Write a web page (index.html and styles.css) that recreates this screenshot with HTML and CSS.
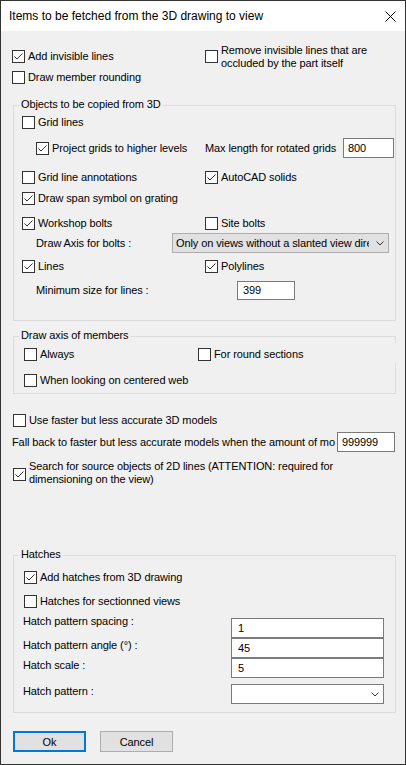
FILE: index.html
```html
<!DOCTYPE html>
<html>
<head>
<meta charset="utf-8">
<link rel="stylesheet" href="styles.css">
</head>
<body>
<div class="window">
  <div class="titlebar">
    <span class="title">Items to be fetched from the 3D drawing to view</span>
    <svg class="close" width="11" height="11" viewBox="0 0 11 11"><path d="M0.5 0.5L10.5 10.5M10.5 0.5L0.5 10.5" stroke="#000" stroke-width="1" fill="none"/></svg>
  </div>
  <div class="content">
    <div class="top">
      <div class="top-col1">
        <div class="cb"><span class="box on"><svg width="11" height="11" viewBox="0 0 11 11"><path d="M1.5 5.5L4 8L9.5 2.5" stroke="#333" fill="none"/></svg></span><span>Add invisible lines</span></div>
        <div class="cb"><span class="box"></span><span>Draw member rounding</span></div>
      </div>
      <div class="cb cb-multi"><span class="box"></span><span>Remove invisible lines that are<br>occluded by the part itself</span></div>
    </div>

    <div class="group g1">
      <span class="legend">Objects to be copied from 3D</span>
      <div class="row r1"><div class="cb"><span class="box"></span><span>Grid lines</span></div></div>
      <div class="row r-project">
        <div class="c-project"><div class="cb"><span class="box on"><svg width="11" height="11" viewBox="0 0 11 11"><path d="M1.5 5.5L4 8L9.5 2.5" stroke="#333" fill="none"/></svg></span><span>Project grids to higher levels</span></div></div>
        <span class="lbl">Max length for rotated grids</span>
        <span class="input in-max">800</span>
      </div>
      <div class="row two r3">
        <div class="col"><div class="cb"><span class="box"></span><span>Grid line annotations</span></div></div>
        <div class="cb"><span class="box on"><svg width="11" height="11" viewBox="0 0 11 11"><path d="M1.5 5.5L4 8L9.5 2.5" stroke="#333" fill="none"/></svg></span><span>AutoCAD solids</span></div>
      </div>
      <div class="row r4"><div class="cb"><span class="box on"><svg width="11" height="11" viewBox="0 0 11 11"><path d="M1.5 5.5L4 8L9.5 2.5" stroke="#333" fill="none"/></svg></span><span>Draw span symbol on grating</span></div></div>
      <div class="row two r5">
        <div class="col"><div class="cb"><span class="box on"><svg width="11" height="11" viewBox="0 0 11 11"><path d="M1.5 5.5L4 8L9.5 2.5" stroke="#333" fill="none"/></svg></span><span>Workshop bolts</span></div></div>
        <div class="cb"><span class="box"></span><span>Site bolts</span></div>
      </div>
      <div class="row r-axis">
        <span class="lbl l-axis">Draw Axis for bolts :</span>
        <span class="select"><span class="sel-text">Only on views without a slanted view dire</span><svg class="chev" width="8" height="5" viewBox="0 0 8 5"><path d="M0.5 0.5L4 4L7.5 0.5" stroke="#333" fill="none"/></svg></span>
      </div>
      <div class="row two r7">
        <div class="col"><div class="cb"><span class="box on"><svg width="11" height="11" viewBox="0 0 11 11"><path d="M1.5 5.5L4 8L9.5 2.5" stroke="#333" fill="none"/></svg></span><span>Lines</span></div></div>
        <div class="cb"><span class="box on"><svg width="11" height="11" viewBox="0 0 11 11"><path d="M1.5 5.5L4 8L9.5 2.5" stroke="#333" fill="none"/></svg></span><span>Polylines</span></div>
      </div>
      <div class="row r-min">
        <span class="lbl l-min">Minimum size for lines :</span>
        <span class="input in-min">399</span>
      </div>
    </div>

    <div class="group g2">
      <span class="legend">Draw axis of members</span>
      <div class="row two g2r1">
        <div class="col2"><div class="cb"><span class="box"></span><span>Always</span></div></div>
        <div class="cb"><span class="box"></span><span>For round sections</span></div>
      </div>
      <div class="row g2r2"><div class="cb"><span class="box"></span><span>When looking on centered web</span></div></div>
    </div>

    <div class="row r-fast"><div class="cb"><span class="box"></span><span>Use faster but less accurate 3D models</span></div></div>
    <div class="row r-fall">
      <span class="lbl l-fall">Fall back to faster but less accurate models when the amount of mo</span>
      <span class="input in-fall">999999</span>
    </div>
    <div class="row r-search">
      <span class="box on"><svg width="11" height="11" viewBox="0 0 11 11"><path d="M1.5 5.5L4 8L9.5 2.5" stroke="#333" fill="none"/></svg></span>
      <span class="search-text">Search for source objects of 2D lines (ATTENTION: required for<br>dimensioning on the view)</span>
    </div>

    <div class="group g3">
      <span class="legend">Hatches</span>
      <div class="row g3r1"><div class="cb"><span class="box on"><svg width="11" height="11" viewBox="0 0 11 11"><path d="M1.5 5.5L4 8L9.5 2.5" stroke="#333" fill="none"/></svg></span><span>Add hatches from 3D drawing</span></div></div>
      <div class="row g3r2"><div class="cb"><span class="box"></span><span>Hatches for sectionned views</span></div></div>
      <div class="row field f-spacing"><span class="lbl fl">Hatch pattern spacing :</span><span class="input in-h">1</span></div>
      <div class="row field f-angle"><span class="lbl fl">Hatch pattern angle (°) :</span><span class="input in-h">45</span></div>
      <div class="row field f-scale"><span class="lbl fl">Hatch scale :</span><span class="input in-h">5</span></div>
      <div class="row field f-pattern"><span class="lbl fl">Hatch pattern :</span><span class="input in-h combo"><svg class="chev" width="8" height="5" viewBox="0 0 8 5"><path d="M0.5 0.5L4 4L7.5 0.5" stroke="#333" fill="none"/></svg></span></div>
    </div>

    <div class="buttons">
      <span class="btn btn-default">Ok</span>
      <span class="btn">Cancel</span>
    </div>
  </div>
</div>
</body>
</html>
```
FILE: styles.css
```css
* { box-sizing: border-box; }
body {
  margin: 0;
  background: #f0f0f0;
  font-family: "Liberation Sans", Arial, sans-serif;
  font-size: 11px;
  letter-spacing: -0.1px;
  color: #000;
}
.window {
  width: 406px;
  height: 765px;
  border: 1px solid #333;
  background: #f0f0f0;
  display: flex;
  flex-direction: column;
  overflow: hidden;
}
.titlebar {
  height: 30px;
  flex: none;
  background: #fff;
  display: flex;
  align-items: center;
  padding-left: 8px;
}
.title { font-size: 12px; letter-spacing: 0; }
.close { margin-left: auto; margin-right: 9px; }
.content { padding-left: 11px; }

.cb {
  display: flex;
  align-items: center;
  height: 13px;
  line-height: 13px;
  white-space: nowrap;
}
.box {
  width: 13px;
  height: 13px;
  flex: none;
  border: 1px solid #333;
  background: #fff;
  margin-right: 3px;
  display: flex;
}
.top { display: flex; margin-top: 13px; }
.top-col1 {
  width: 193px;
  padding-top: 6px;
  display: flex;
  flex-direction: column;
  gap: 8px;
}
.cb-multi { height: 25px; line-height: 12.5px; }

.group {
  position: relative;
  margin-left: 1px;
  width: 383px;
  border: 1px solid #dcdcdc;
}
.legend {
  position: absolute;
  top: -9px;
  left: 5px;
  padding: 0 2px;
  line-height: 14px;
  background: #f0f0f0;
  white-space: nowrap;
}
.row { display: flex; align-items: center; }
.two .col { width: 183px; }
.lbl { white-space: nowrap; line-height: 13px; }
.input {
  display: block;
  flex: none;
  height: 20px;
  line-height: 18px;
  background: #fff;
  border: 1px solid #7a7a7a;
  padding-left: 5px;
  white-space: nowrap;
}

.g1 { margin-top: 21px; height: 216px; padding-left: 8px; }
.r1 { margin-top: 10px; }
.r-project { margin-top: 9px; height: 20px; padding-left: 14px; }
.c-project { width: 169px; }
.in-max { width: 51px; margin-left: auto; margin-right: 1px; padding-left: 4px; }
.r3 { margin-top: 13px; }
.r4 { margin-top: 8px; }
.r5 { margin-top: 12px; }
.r-axis { margin-top: 3px; height: 20px; padding-left: 14px; }
.l-axis { width: 136px; }
.select {
  width: 217px;
  height: 20px;
  display: flex;
  align-items: center;
  background: #e1e1e1;
  border: 1px solid #adadad;
  padding-left: 3px;
}
.sel-text { flex: 1; overflow: hidden; white-space: nowrap; }
.chev { flex: none; margin: 0 4px 0 7px; }
.r7 { margin-top: 7px; }
.r-min { margin-top: 8px; height: 19px; padding-left: 14px; }
.l-min { width: 201px; }
.in-min { width: 58px; height: 19px; line-height: 17px; }

.g2 { margin-top: 15px; height: 58px; padding-left: 10px; }
.g2::after {
  content: "";
  position: absolute;
  right: -1px;
  top: 6px;
  width: 1px;
  height: 20px;
  background: #f0f0f0;
}
.g2r1 { margin-top: 11px; }
.col2 { width: 174px; }
.g2r2 { margin-top: 13px; }

.r-fast { margin-top: 20px; margin-left: 1px; }
.r-fall { margin-top: 5px; height: 20px; }
.l-fall { width: 325px; overflow: hidden; }
.in-fall { width: 58px; padding-left: 4px; }
.r-search { margin-top: 8px; margin-left: 1px; align-items: flex-start; }
.r-search .box { margin-top: 8px; }
.search-text { line-height: 13px; }

.g3 { margin-top: 69px; height: 158px; padding-left: 10px; }
.g3r1 { margin-top: 15px; }
.g3r2 { margin-top: 11px; }
.field { height: 20px; margin-left: -1px; align-items: flex-start; }
.fl { width: 208px; }
.in-h { width: 153px; padding-left: 6px; }
.f-spacing { margin-top: 10px; }
.f-spacing .fl { margin-top: -3px; }
.f-angle .fl, .f-scale .fl { margin-top: 1px; }
.f-pattern { margin-top: 6px; }
.f-pattern .fl { margin-top: 1px; }
.combo { display: flex; align-items: center; justify-content: flex-end; }
.combo .chev { margin: 0 4px 0 0; }

.buttons { display: flex; gap: 14px; margin-top: 18px; margin-left: 1px; }
.btn {
  width: 73px;
  height: 21px;
  display: flex;
  align-items: center;
  justify-content: center;
  background: #e1e1e1;
  border: 1px solid #adadad;
}
.btn-default { border: 2px solid #0078d7; }
```
